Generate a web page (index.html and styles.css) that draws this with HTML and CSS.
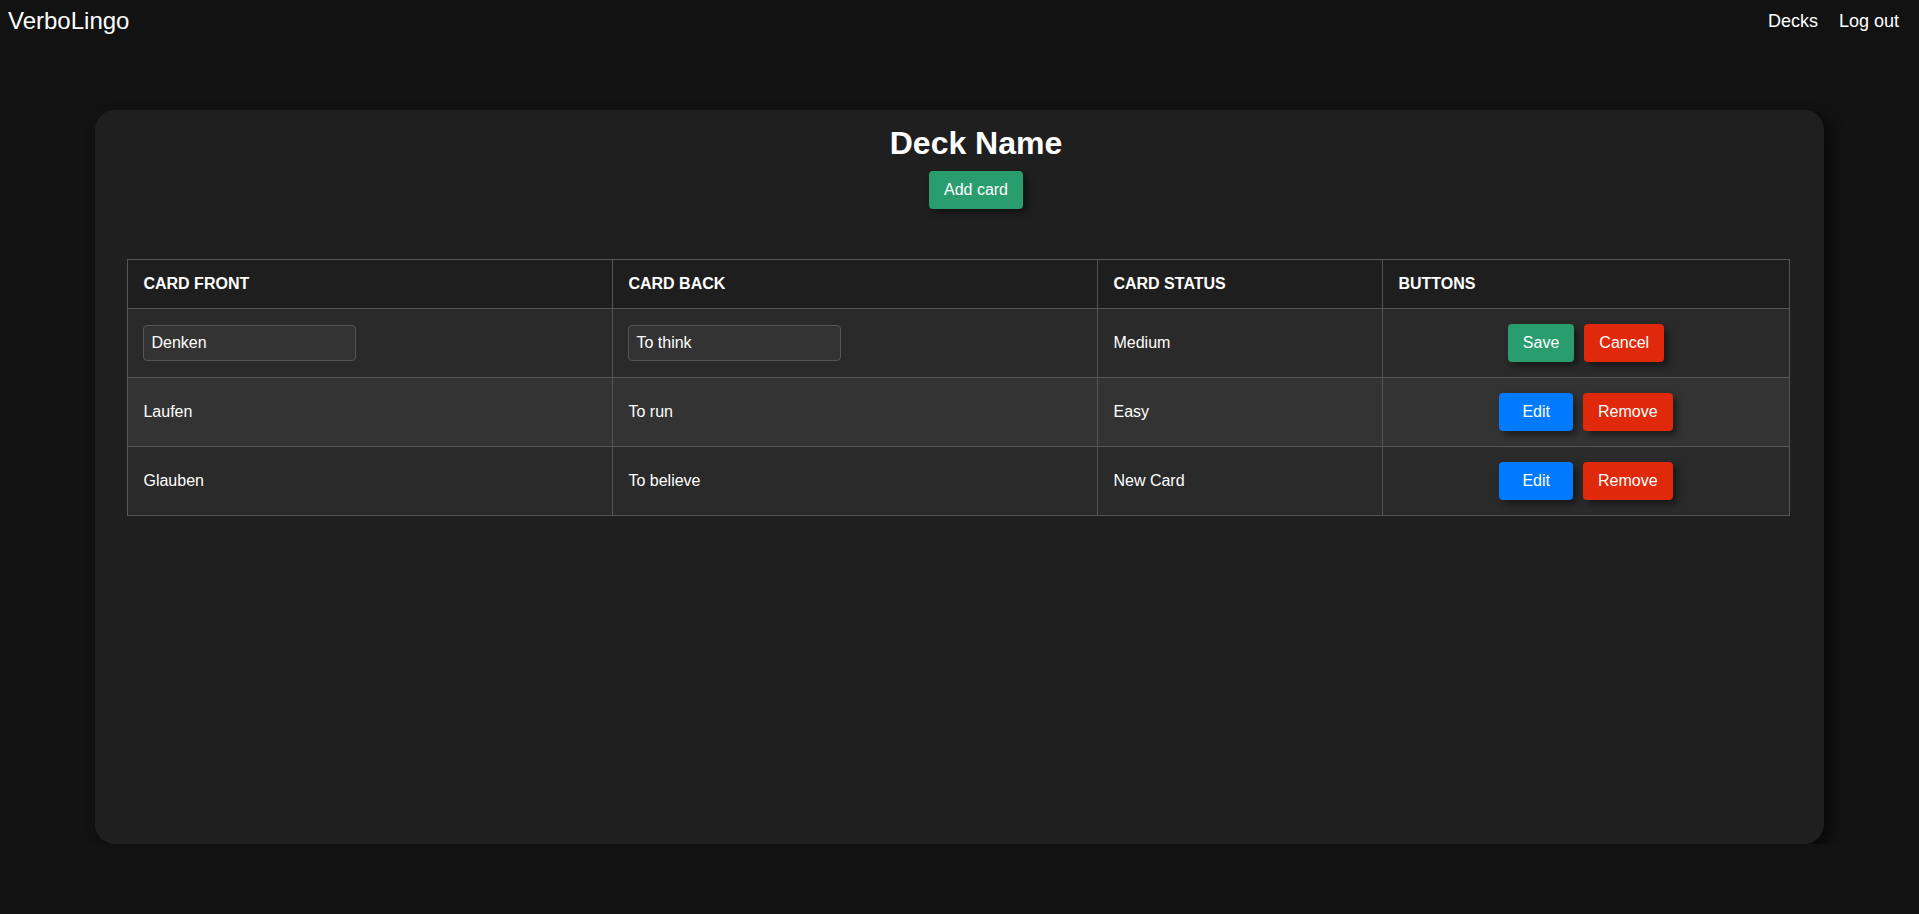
FILE: index.html
```html
<!DOCTYPE html>
<html lang="en">
<head>
<meta charset="utf-8">
<title>VerboLingo</title>
<link rel="stylesheet" href="styles.css">
</head>
<body>
<nav class="nav">
  <div class="brand">VerboLingo</div>
  <div class="links">
    <a class="link" href="#">Decks</a>
    <a class="link" href="#">Log out</a>
  </div>
</nav>
<main class="card">
  <div class="deck-head">
    <h1 class="title">Deck Name</h1>
    <button class="btn btn-green">Add card</button>
  </div>
  <table class="cards">
    <colgroup>
      <col class="c1"><col class="c2"><col class="c3"><col>
    </colgroup>
    <thead>
      <tr><th>Card Front</th><th>Card Back</th><th>Card Status</th><th>Buttons</th></tr>
    </thead>
    <tbody>
      <tr>
        <td><input class="field" type="text" value="Denken"></td>
        <td><input class="field" type="text" value="To think"></td>
        <td>Medium</td>
        <td><div class="actions"><button class="btn btn-green">Save</button><button class="btn btn-red">Cancel</button></div></td>
      </tr>
      <tr>
        <td>Laufen</td>
        <td>To run</td>
        <td>Easy</td>
        <td><div class="actions"><button class="btn btn-blue">Edit</button><button class="btn btn-red">Remove</button></div></td>
      </tr>
      <tr>
        <td>Glauben</td>
        <td>To believe</td>
        <td>New Card</td>
        <td><div class="actions"><button class="btn btn-blue">Edit</button><button class="btn btn-red">Remove</button></div></td>
      </tr>
    </tbody>
  </table>
</main>
</body>
</html>
```
FILE: styles.css
```css
* { box-sizing: border-box; }
html, body {
  margin: 0;
  background: #121212;
  color: #ffffff;
  font-family: "Liberation Sans", Arial, sans-serif;
  font-size: 16px;
}
.nav {
  display: flex;
  justify-content: space-between;
  align-items: center;
  height: 35px;
  padding: 7px 20px 0 8px;
}
.brand {
  font-size: 24px;
  line-height: 28px;
}
.links {
  display: flex;
  gap: 21px;
}
.link {
  color: #ffffff;
  text-decoration: none;
  font-size: 18px;
  line-height: 21px;
}
.card {
  width: calc(90% + 1px);
  height: 734px;
  margin: 75px auto 0;
  background: #1f1f1f;
  border-radius: 20px;
  padding: 15px 34px 15px 32px;
  box-shadow: 6px 6px 14px rgba(0, 0, 0, 0.55);
}
.deck-head {
  display: flex;
  flex-direction: column;
  align-items: center;
  padding-left: 35px;
}
.title {
  margin: 0 0 9px;
  font-size: 32px;
  line-height: 37px;
  font-weight: bold;
}
.btn {
  font-family: "Liberation Sans", Arial, sans-serif;
  font-size: 16px;
  line-height: 18px;
  color: #ffffff;
  border: none;
  border-radius: 4px;
  padding: 10px 15px;
  box-shadow: 4px 4px 7px rgba(0, 0, 0, 0.45);
  cursor: pointer;
}
.btn-green { background: #2a9d6f; }
.btn-red { background: #e0290a; }
.btn-blue { background: #007bff; padding: 10px 23px; }
.cards {
  width: 100%;
  margin-top: 50px;
  border-collapse: collapse;
  table-layout: fixed;
  border: 1px solid #555555;
}
.c1, .c2 { width: 485px; }
.c3 { width: 285px; }
.cards th {
  background: #1e1e1e;
  text-transform: uppercase;
  text-align: left;
  font-weight: bold;
  line-height: 18px;
  padding: 15px;
  border: 1px solid #555555;
}
.cards td {
  line-height: 18px;
  padding: 15px;
  border: 1px solid #555555;
  vertical-align: middle;
  background: #2a2a2a;
}
.cards tbody tr:nth-child(even) td { background: #333333; }
.field {
  display: block;
  width: 213px;
  height: 36px;
  padding: 0 7px;
  background: #333333;
  border: 1px solid #555555;
  border-radius: 4px;
  color: #ffffff;
  font-family: "Liberation Sans", Arial, sans-serif;
  font-size: 16px;
}
.actions {
  display: flex;
  justify-content: center;
  gap: 10px;
}
```
